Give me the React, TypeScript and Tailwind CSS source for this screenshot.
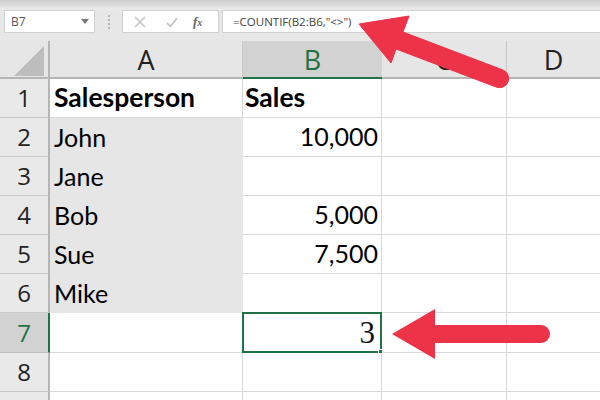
const cellFont = "font-['Lato',sans-serif]";
const rowLines = "border-b border-[#d9d9d9]";
const cols = "grid grid-cols-[50px_193px_139px_125px_1fr]";

const rows = [
  { n: 1, a: "Salesperson", b: "Sales", bold: true, h: "h-[39px]" },
  { n: 2, a: "John", b: "10,000", fill: true, h: "h-[39px]" },
  { n: 3, a: "Jane", b: "", fill: true, h: "h-[39px]" },
  { n: 4, a: "Bob", b: "5,000", fill: true, h: "h-[39px]" },
  { n: 5, a: "Sue", b: "7,500", fill: true, h: "h-[39px]" },
  { n: 6, a: "Mike", b: "", fill: true, h: "h-[39px]" },
  { n: 7, a: "", b: "", active: true, h: "h-[40px]" },
  { n: 8, a: "", b: "", h: "h-[39px]" },
];

function Toolbar() {
  return (
    <div className="h-[41px] shrink-0 bg-[#e7e7e7] flex flex-col">
      <div className="h-[10px] bg-gradient-to-b from-[#cdcdcd] to-[#ececec]" />
      <div className="flex items-start pl-[4px]">
        <div className="w-[91px] h-[23px] bg-white border border-[#d0d0d0] flex items-center justify-between pl-[6px] pr-[5px]">
          <span className="text-[12px] text-[#555]">B7</span>
          <svg width="8" height="5" viewBox="0 0 8 5">
            <path d="M0 0h8L4 5z" fill="#777" />
          </svg>
        </div>
        <div className="w-[27px] h-[23px] flex flex-col items-center justify-center gap-[2px]">
          <div className="w-[2px] h-[2px] bg-[#b5b5b5]" />
          <div className="w-[2px] h-[2px] bg-[#b5b5b5]" />
          <div className="w-[2px] h-[2px] bg-[#b5b5b5]" />
          <div className="w-[2px] h-[2px] bg-[#b5b5b5]" />
        </div>
        <div className="w-[97px] h-[23px] bg-white border border-[#d0d0d0] flex items-center pl-[11px]">
          <svg width="12" height="12" viewBox="0 0 12 12" className="mr-[20px]">
            <path d="M1 1l10 10M11 1L1 11" stroke="#c4c4c4" strokeWidth="1.6" fill="none" />
          </svg>
          <svg width="12" height="12" viewBox="0 0 12 12" className="mr-[15px]">
            <path d="M1 7l3.5 3.5L11 2" stroke="#c4c4c4" strokeWidth="1.8" fill="none" />
          </svg>
          <span className="text-[13px] font-bold italic text-[#666] font-['Liberation_Serif',serif]">
            f<span className="text-[10px]">x</span>
          </span>
        </div>
        <div className="w-[3px]" />
        <div className="flex-1 h-[23px] bg-white border-y border-l border-[#d0d0d0] flex items-center pl-[10px]">
          <span className="text-[11.5px] text-[#444]">=COUNTIF(B2:B6,"&lt;&gt;")</span>
        </div>
      </div>
    </div>
  );
}

function HeaderRow() {
  return (
    <div className={`h-[38px] shrink-0 ${cols} text-[27px] leading-none text-[#222] bg-[#e6e6e6]`}>
      <div className="relative border-r-2 border-b-2 border-[#b5b5b5]">
        <svg width="32" height="32" viewBox="0 0 32 32" className="absolute right-[2px] bottom-[1px]">
          <path d="M30 2v30H0z" fill="#bdbdbd" />
        </svg>
      </div>
      <div className="flex items-center justify-center border-r border-b-2 border-[#b5b5b5] border-r-[#c8c8c8]">A</div>
      <div className="flex items-center justify-center bg-[#d2d2d2] text-[#217346] border-b-2 border-[#217346]">B</div>
      <div className="flex items-center justify-center border-r border-b-2 border-[#b5b5b5] border-r-[#c8c8c8]">C</div>
      <div className="flex items-center justify-center border-b-2 border-[#b5b5b5]">D</div>
    </div>
  );
}

function Row({ n, a, b, bold, fill, active, h }: { n: number; a: string; b: string; bold?: boolean; fill?: boolean; active?: boolean; h: string }) {
  const size = bold ? "text-[26.5px] font-bold" : "text-[25px]";
  return (
    <div className={`${h} shrink-0 ${cols} leading-none`}>
      <div className={`flex items-center justify-center text-[24px] leading-none border-r-2 border-b ${active ? "bg-[#d2d2d2] text-[#217346] border-r-[#217346] border-b-[#c0c0c0]" : "bg-[#e9e9e9] text-[#222] border-r-[#b5b5b5] border-b-[#c8c8c8]"}`}>
        {n}
      </div>
      <div className={`flex items-center pl-[4px] pb-[1px] ${cellFont} ${size} leading-none text-black ${fill ? "bg-[#e6e6e6]" : `border-r border-[#d9d9d9] ${rowLines}`}`}>
        {a}
      </div>
      <div className={`relative flex items-center pb-[1px] ${cellFont} ${size} leading-none text-black border-r border-[#d9d9d9] ${rowLines} ${bold ? "justify-start pl-[2px]" : "justify-end pr-[3px]"}`}>
        {b}
        {active && (
          <div className="absolute -left-px -top-px -right-px -bottom-px border-2 border-[#217346] flex items-center justify-end pr-[5px]">
            <span className="font-['Liberation_Serif',serif] text-[31px] leading-none text-[#111]">3</span>
            <div className="absolute -right-[3px] -bottom-[3px] w-[5px] h-[5px] bg-[#217346] border border-white" />
          </div>
        )}
      </div>
      <div className={`border-r border-[#d9d9d9] ${rowLines}`} />
      <div className={rowLines} />
    </div>
  );
}

export default function App() {
  return (
    <div className="relative w-[600px] h-[400px] overflow-hidden bg-white flex flex-col font-['Open_Sans',sans-serif]">
      <Toolbar />
      <HeaderRow />
      {rows.map((r) => (
        <Row key={r.n} {...r} />
      ))}
      <div className={`flex-1 ${cols}`}>
        <div className="bg-[#e9e9e9] border-r-2 border-[#b5b5b5]" />
        <div className="border-r border-[#d9d9d9]" />
        <div className="border-r border-[#d9d9d9]" />
        <div className="border-r border-[#d9d9d9]" />
        <div />
      </div>
      {/* red arrows laid over the sheet */}
      <svg width="600" height="400" viewBox="0 0 600 400" className="absolute left-0 top-0 pointer-events-none">
        <path d="M359 24L409 16L403 32L503 70a9 9 0 0 1-7 17L396 49L391 63Z" fill="#ec3347" stroke="#ec3347" strokeLinejoin="round" />
        <path d="M392 334L435 309V325H541a9 9 0 0 1 0 18H435V359Z" fill="#ec3347" />
      </svg>
    </div>
  );
}
